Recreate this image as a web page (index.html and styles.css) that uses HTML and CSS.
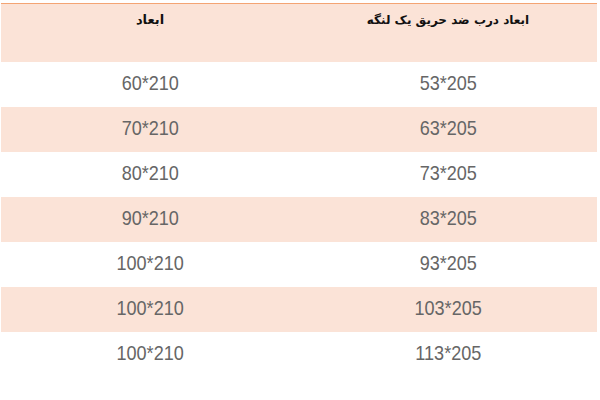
FILE: index.html
```html
<!DOCTYPE html>
<html lang="fa" dir="rtl">
<head>
<meta charset="utf-8">
<link rel="stylesheet" href="styles.css">
</head>
<body>
<div class="table">
  <div class="row head">
    <div class="cell">ابعاد درب ضد حریق یک لنگه</div>
    <div class="cell">ابعاد</div>
  </div>
  <div class="row"><div class="cell"><span class="num">53*205</span></div><div class="cell"><span class="num">60*210</span></div></div>
  <div class="row alt"><div class="cell"><span class="num">63*205</span></div><div class="cell"><span class="num">70*210</span></div></div>
  <div class="row"><div class="cell"><span class="num">73*205</span></div><div class="cell"><span class="num">80*210</span></div></div>
  <div class="row alt"><div class="cell"><span class="num">83*205</span></div><div class="cell"><span class="num">90*210</span></div></div>
  <div class="row"><div class="cell"><span class="num">93*205</span></div><div class="cell"><span class="num">100*210</span></div></div>
  <div class="row alt"><div class="cell"><span class="num">103*205</span></div><div class="cell"><span class="num">100*210</span></div></div>
  <div class="row"><div class="cell"><span class="num">113*205</span></div><div class="cell"><span class="num">100*210</span></div></div>
</div>
</body>
</html>
```
FILE: styles.css
```css
html, body {
  margin: 0;
  padding: 0;
  background: #ffffff;
}
body {
  padding: 3px 3px 0 1px;
  font-family: "Liberation Sans", Arial, sans-serif;
}
.table {
  display: flex;
  flex-direction: column;
  width: 596px;
  border-top: 1px solid #f4a473;
}
.row {
  display: grid;
  grid-template-columns: 1fr 1fr;
  height: 45px;
}
.row.alt,
.row.head {
  background: #fbe3d7;
}
.row.head {
  height: 58px;
}
.cell {
  display: flex;
  justify-content: center;
  align-items: center;
  padding-bottom: 3px;
}
.head .cell {
  align-items: flex-start;
  padding: 8px 0 0;
  font-family: "DejaVu Sans", sans-serif;
  font-weight: bold;
  font-size: 13px;
  color: #111111;
}
.head .cell:first-child {
  font-size: 12px;
  padding-top: 9px;
}
.num {
  display: inline-block;
  direction: ltr;
  font-size: 21px;
  color: #666666;
  transform: scaleX(0.86);
}
```
